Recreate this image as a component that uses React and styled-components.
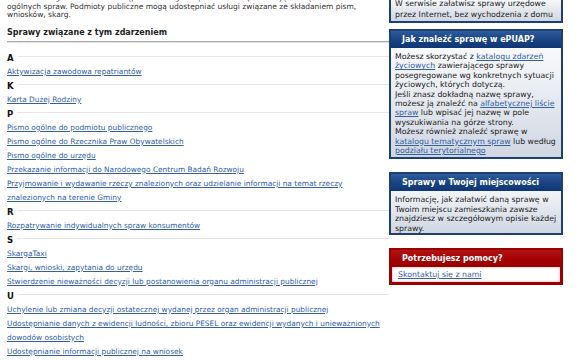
import React from "react";
import styled, { createGlobalStyle } from "styled-components";

const GlobalStyle = createGlobalStyle`
  html, body {
    margin: 0;
    padding: 0;
    background: #fff;
    overflow: hidden;
  }
  body {
    font-family: "DejaVu Sans", Verdana, sans-serif;
    color: #222;
  }
`;

const Page = styled.div`
  display: flex;
  align-items: flex-start;
  width: 582px;
  height: 373px;
  margin-top: -12px;
  overflow: hidden;
`;

const Main = styled.main`
  width: 382px;
  flex-shrink: 0;
  padding: 6px 0 0 7px;
`;

const Intro = styled.p`
  margin: 0;
  font-size: 7.5px;
  line-height: 8.5px;
  color: #333;
`;

const Heading = styled.h2`
  margin: 7px 0 0;
  padding-bottom: 2px;
  font-size: 8px;
  line-height: 12px;
  font-weight: bold;
  color: #222;
  border-bottom: 1px solid #a8a8a8;
  box-shadow: 0 1px 0 #e4e4e4;
`;

const List = styled.ul`
  list-style: none;
  margin: 9px 0 0;
  padding: 0;
`;

const LetterRow = styled.li`
  display: flex;
  align-items: center;
  height: 14px;
  font-size: 8.5px;
  font-weight: bold;
  color: #111;

  &::after {
    content: "";
    flex: 1;
    height: 1px;
    margin: 0 0 2px 4px;
    background: #e6e6e6;
  }
`;

const LinkRow = styled.li`
  font-size: 7.4px;
  line-height: 14px;
  padding-right: 2px;
`;

const Link = styled.a`
  color: #3160a6;
  text-decoration: underline;
  cursor: pointer;
`;

const Sidebar = styled.aside`
  width: 174px;
  flex-shrink: 0;
  padding-top: 4px;
  display: flex;
  flex-direction: column;
`;

const Box = styled.section`
  margin-bottom: ${(p) => p.$gap ?? 13}px;
  border: 2px solid ${(p) => (p.$red ? "#9a0000" : "#1d3f72")};
  background: ${(p) =>
    p.$red ? "#a30000" : "linear-gradient(to bottom, #ffffff, #d0d7e2)"};
`;

const BoxTitle = styled.h3`
  margin: 0;
  height: 17px;
  padding-left: 11px;
  font-size: 8px;
  line-height: 17px;
  font-weight: bold;
  color: #fff;
  background: ${(p) =>
    p.$red
      ? "linear-gradient(to bottom, #b31212, #a20202 60%, #980000)"
      : "linear-gradient(to bottom, #2d5b9c, #184282 55%, #0f3674)"};
`;

const BoxBody = styled.div`
  padding: 4px 3px ${(p) => p.$bottom ?? 2}px 4px;
  font-size: 7.8px;
  line-height: ${(p) => p.$lh ?? 9.4}px;
  color: #222;
`;

const HelpBody = styled.div`
  margin: 0 1px 1px;
  height: 15px;
  padding-left: 6px;
  background: #fff;
  box-shadow: inset 0 0 3px #e2a2a2;
  font-size: 7.8px;
  line-height: 15px;
`;

const letters = [
  { letter: "A", items: ["Aktywizacja zawodowa repatriantów"] },
  { letter: "K", items: ["Karta Dużej Rodziny"] },
  {
    letter: "P",
    items: [
      "Pismo ogólne do podmiotu publicznego",
      "Pismo ogólne do Rzecznika Praw Obywatelskich",
      "Pismo ogólne do urzędu",
      "Przekazanie informacji do Narodowego Centrum Badań Rozwoju",
      "Przyjmowanie i wydawanie rzeczy znalezionych oraz udzielanie informacji na temat rzeczy znalezionych na terenie Gminy",
    ],
  },
  { letter: "R", items: ["Rozpatrywanie indywidualnych spraw konsumentów"] },
  {
    letter: "S",
    items: [
      "SkargaTaxi",
      "Skargi, wnioski, zapytania do urzędu",
      "Stwierdzenie nieważności decyzji lub postanowienia organu administracji publicznej",
    ],
  },
  {
    letter: "U",
    items: [
      "Uchylenie lub zmiana decyzji ostatecznej wydanej przez organ administracji publicznej",
      "Udostępnianie danych z ewidencji ludności, zbioru PESEL oraz ewidencji wydanych i unieważnionych dowodów osobistych",
      "Udostępnianie informacji publicznej na wniosek",
      "Uzyskanie konta użytkownika aplikacji KRUS",
    ],
  },
];

const App = () => {
  return (
    <>
      <GlobalStyle />
      <Page>
        <Main>
          <Intro>
            W ramach tego zdarzenia udostępniono usługi związane z korespondencją z urzędem. W zakresie
            ogólnych spraw. Podmioty publiczne mogą udostępniać usługi związane ze składaniem pism,
            wniosków, skarg.
          </Intro>
          <Heading>Sprawy związane z tym zdarzeniem</Heading>
          <List>
            {letters.map((group) => (
              <React.Fragment key={group.letter}>
                <LetterRow>{group.letter}</LetterRow>
                {group.items.map((item) => (
                  <LinkRow key={item}>
                    <Link>{item}</Link>
                  </LinkRow>
                ))}
              </React.Fragment>
            ))}
          </List>
        </Main>

        <Sidebar>
          <Box $gap={6}>
            <BoxBody $lh={11} $bottom={1}>
              W serwisie załatwisz sprawy urzędowe
              <br />
              przez Internet, bez wychodzenia z domu
            </BoxBody>
          </Box>

          <Box>
            <BoxTitle>Jak znaleźć sprawę w ePUAP?</BoxTitle>
            <BoxBody>
              Możesz skorzystać z <Link>katalogu zdarzeń</Link>
              <br />
              <Link>życiowych</Link> zawierającego sprawy
              <br />
              posegregowane wg konkretnych sytuacji
              <br />
              życiowych, których dotyczą.
              <br />
              Jeśli znasz dokładną nazwę sprawy,
              <br />
              możesz ją znaleźć na <Link>alfabetycznej liście</Link>
              <br />
              <Link>spraw</Link> lub wpisać jej nazwę w pole
              <br />
              wyszukiwania na górze strony.
              <br />
              Możesz również znaleźć sprawę w
              <br />
              <Link>katalogu tematycznym spraw</Link> lub według
              <br />
              <Link>podziału terytorialnego</Link>
            </BoxBody>
          </Box>

          <Box>
            <BoxTitle>Sprawy w Twojej miejscowości</BoxTitle>
            <BoxBody $bottom={0}>
              Informację, jak załatwić daną sprawę w
              <br />
              Twoim miejscu zamieszkania zawsze
              <br />
              znajdziesz w szczegółowym opisie każdej
              <br />
              sprawy.
            </BoxBody>
          </Box>

          <Box $red>
            <BoxTitle $red>Potrzebujesz pomocy?</BoxTitle>
            <HelpBody>
              <Link>Skontaktuj się z nami</Link>
            </HelpBody>
          </Box>
        </Sidebar>
      </Page>
    </>
  );
};

export default App;
